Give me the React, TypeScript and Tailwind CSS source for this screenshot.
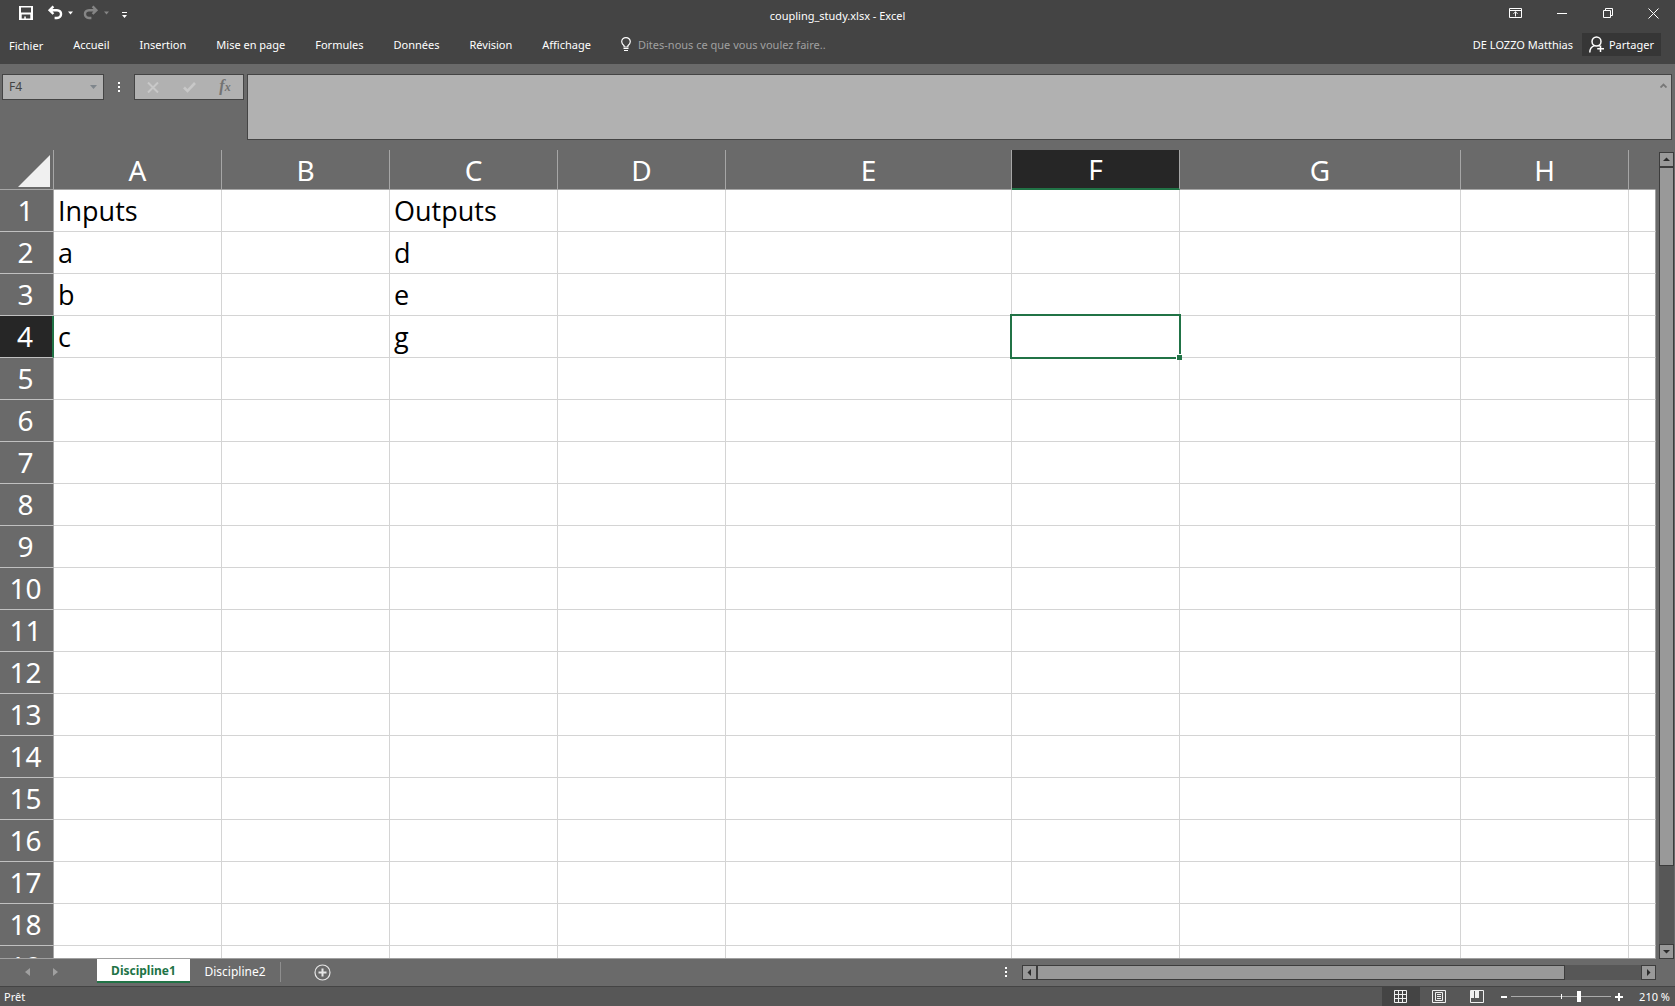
import { useState } from "react";

const columns = [
  { name: "A", width: "w-[168px]" },
  { name: "B", width: "w-[168px]" },
  { name: "C", width: "w-[168px]" },
  { name: "D", width: "w-[168px]" },
  { name: "E", width: "w-[286px]" },
  { name: "F", width: "w-[168px]" },
  { name: "G", width: "w-[281px]" },
  { name: "H", width: "w-[168px]" },
  { name: "", width: "" },
];

const rowCount = 19;

const cells: Record<string, string> = {
  A1: "Inputs",
  A2: "a",
  A3: "b",
  A4: "c",
  C1: "Outputs",
  C2: "d",
  C3: "e",
  C4: "g",
};

const menus = [
  "Accueil",
  "Insertion",
  "Mise en page",
  "Formules",
  "Données",
  "Révision",
  "Affichage",
];

function Caret({ className }: { className: string }) {
  return (
    <svg className={className} width="7" height="4" viewBox="0 0 7 4" fill="currentColor" aria-hidden="true">
      <path d="M0 0h7L3.5 4z" />
    </svg>
  );
}

function Dots() {
  return (
    <span className="flex w-[2px] flex-col gap-[2px]" aria-hidden="true">
      <span className="h-[2px] bg-white" />
      <span className="h-[2px] bg-white" />
      <span className="h-[2px] bg-white" />
    </span>
  );
}

function TitleBar() {
  return (
    <div className="grid h-[33px] grid-cols-[1fr_auto_1fr] text-white">
      <div className="flex items-start pt-[5px] pl-[18px]">
        <button aria-label="Enregistrer" className="mr-[13px]">
          <svg width="16" height="16" viewBox="0 0 16 16" fill="currentColor">
            <path fillRule="evenodd" d="M1 1h14v14H1zM3 2.5v5h10v-5zM3.7 9.5v4h2.6v-2h1.5v2h4.5v-4z" />
          </svg>
        </button>
        <button aria-label="Annuler" className="mr-[5px]">
          <svg width="16" height="16" viewBox="0 0 16 16" fill="none" stroke="currentColor" strokeWidth="2.4">
            <path d="M6.4 1.4 2.6 5.2l3.8 3.8M2.8 5.2H10c5.4 0 5.4 7.8 0 7.8H7.6" />
          </svg>
        </button>
        <button aria-label="Options d'annulation" className="mr-[10px] pt-[6px]">
          <Caret className="w-[5px]" />
        </button>
        <button aria-label="Rétablir" className="mr-[5px] text-[#858585]">
          <svg width="16" height="16" viewBox="0 0 16 16" fill="none" stroke="currentColor" strokeWidth="2.4">
            <path d="M9.6 1.4l3.8 3.8-3.8 3.8M13.2 5.2H6C.6 5.2.6 13 6 13h2.4" />
          </svg>
        </button>
        <button aria-label="Options de rétablissement" className="mr-[13px] pt-[6px] text-[#858585]">
          <Caret className="w-[5px]" />
        </button>
        <button aria-label="Personnaliser la barre d'accès rapide" className="pt-[7px]">
          <svg width="5" height="6" viewBox="0 0 5 6" fill="currentColor">
            <path d="M0 0h5v1H0zM0 3h5L2.5 6z" />
          </svg>
        </button>
      </div>
      <h1 className="pt-[8px] text-[11px] leading-[16px]">coupling_study.xlsx - Excel</h1>
      <div className="flex justify-end pb-[7px]">
        <button aria-label="Options d'affichage du ruban" className="flex w-[48px] items-center justify-center">
          <svg width="13" height="10" viewBox="0 0 13 10" fill="none" stroke="currentColor">
            <path d="M.5.5h12v9H.5zM0 2.5h13M6.5 8.5v-5M4.5 5.8l2-2 2 2" />
          </svg>
        </button>
        <button aria-label="Réduire" className="flex w-[46px] items-center justify-center">
          <span className="h-px w-[10px] bg-white" />
        </button>
        <button aria-label="Restaurer" className="flex w-[46px] items-center justify-center">
          <svg width="10" height="10" viewBox="0 0 10 10" fill="none" stroke="currentColor">
            <path d="M.5 2.5h7v7h-7zM2.5 2V.5h7v7H8" />
          </svg>
        </button>
        <button aria-label="Fermer" className="flex w-[44px] items-center justify-center">
          <svg width="11" height="11" viewBox="0 0 11 11" fill="none" stroke="currentColor">
            <path d="m.5.5 10 10M10.5.5l-10 10" />
          </svg>
        </button>
      </div>
    </div>
  );
}

function MenuBar() {
  return (
    <nav className="flex h-[31px] items-start pr-[14px] pl-[9px] text-[11px] leading-[16px] text-white">
      <div className="flex gap-[30px] pt-[4px]">
        <button className="pt-px">Fichier</button>
        {menus.map((m) => (
          <button key={m} className="pb-px">
            {m}
          </button>
        ))}
      </div>
      <label className="ml-[30px] flex flex-1 gap-[7px] pt-[4px]">
        <svg className="shrink-0" width="10" height="15" viewBox="0 0 10 15" fill="none" stroke="currentColor" aria-hidden="true">
          <path strokeWidth="1.2" d="M3.1 10V8.7C1.6 7.3.7 6.3.7 4.7a4.3 4.1 0 0 1 8.6 0c0 1.6-.9 2.6-2.4 4V10z" />
          <path d="M2.5 11.5h5M3 13.5h4" />
        </svg>
        <input
          aria-label="Dites-nous ce que vous voulez faire"
          placeholder="Dites-nous ce que vous voulez faire.."
          className="h-[16px] w-[220px] bg-transparent outline-none placeholder:text-[#a0a0a0]"
        />
      </label>
      <span className="mr-[9px] pt-[4px]">DE LOZZO Matthias</span>
      <button className="flex h-[23px] items-center gap-[4px] bg-[#363636] pr-[7px] pl-[7px]">
        <svg width="16" height="17" viewBox="0 0 16 17" fill="none" stroke="currentColor" strokeWidth="1.5" aria-hidden="true">
          <circle cx="7.5" cy="5.5" r="4.5" />
          <path d="M.8 16.5C.8 13 2.5 10.6 5.3 9.6M9.7 9.3l1 1M11.5 9.5v6.5M8.2 12.75h6.8" />
        </svg>
        Partager
      </button>
    </nav>
  );
}

function FormulaBar() {
  return (
    <div className="flex items-start bg-[#6a6a6a] pt-[10px] pr-[3px] pb-[10px] pl-[2px]">
      <div className="flex h-[26px] w-[102px] items-center border border-[#444] bg-[#b1b1b1] pr-[6px] pl-[6px] text-[#444]">
        <input aria-label="Zone Nom" defaultValue="F4" className="min-w-0 flex-1 bg-transparent text-[12px] outline-none" />
        <button aria-label="Liste des noms" className="text-[#7f868c]">
          <Caret className="w-[7px]" />
        </button>
      </div>
      <div className="flex h-[26px] w-[30px] items-center justify-center">
        <Dots />
      </div>
      <div className="mr-[3px] flex h-[26px] w-[110px] items-center border border-[#444] bg-[#b1b1b1]">
        <button aria-label="Annuler la saisie" className="flex flex-1 justify-center text-[#c8c8c8]">
          <svg width="12" height="11" viewBox="0 0 12 11" fill="none" stroke="currentColor" strokeWidth="2">
            <path d="m1 .5 10 10M11 .5l-10 10" />
          </svg>
        </button>
        <button aria-label="Valider" className="flex flex-1 justify-center text-[#c8c8c8]">
          <svg width="13" height="11" viewBox="0 0 13 11" fill="none" stroke="currentColor" strokeWidth="2.6">
            <path d="m1 5.5 3.5 3.5L12 1" />
          </svg>
        </button>
        <button
          aria-label="Insérer une fonction"
          className="flex-1 pb-[2px] font-['Liberation_Serif',serif] text-[16px] leading-[16px] font-bold text-[#737373] italic"
        >
          f<span className="text-[12px]">x</span>
        </button>
      </div>
      <div className="relative flex h-[66px] flex-1">
        <textarea aria-label="Barre de formule" className="flex-1 resize-none border border-[#444] bg-[#b1b1b1] p-1 text-[12px] outline-none" />
        <button aria-label="Réduire la barre de formule" className="absolute top-[9px] right-[5px] text-[#777]">
          <svg width="7" height="5" viewBox="0 0 7 5" fill="none" stroke="currentColor" strokeWidth="1.8">
            <path d="M.5 4.5l3-3 3 3" />
          </svg>
        </button>
      </div>
    </div>
  );
}

function Sheet() {
  const rows = Array.from({ length: rowCount }, (_, i) => i + 1);
  return (
    <div className="min-w-0 flex-1 overflow-hidden border-b border-[#a0a0a0] bg-white">
      <table className="w-full table-fixed border-separate border-spacing-0 text-[28px] leading-[38px]">
        <thead>
          <tr className="h-[40px] bg-[#6a6a6a] text-white">
            <th className="w-[54px] border-r border-b border-[#a6a6a6] p-0">
              <button aria-label="Tout sélectionner" className="block pt-[2px] pl-[18px]">
                <svg width="32" height="32" viewBox="0 0 32 32" fill="#f0f0f0">
                  <path d="M32 0v32H0z" />
                </svg>
              </button>
            </th>
            {columns.map((c) => (
              <th
                key={c.name}
                scope="col"
                className={`${c.width} p-0 font-normal ${
                  c.name === "F"
                    ? "border-r border-b-2 border-r-[#a6a6a6] border-b-[#217346] bg-[#262626]"
                    : c.name
                      ? "border-r border-b border-[#a6a6a6]"
                      : "border-r border-b border-r-[#6a6a6a] border-b-[#a6a6a6]"
                }`}
              >
                {c.name}
              </th>
            ))}
          </tr>
        </thead>
        <tbody>
          {rows.map((r) => (
            <tr key={r} className="h-[42px]">
              <th
                scope="row"
                className={`border-b border-b-[#c0c0c0] pt-0 pr-[2px] pb-[2px] pl-0 font-normal text-white ${
                  r === 4 ? "border-r-2 border-r-[#217346] bg-[#262626]" : "border-r border-r-[#a6a6a6] bg-[#6a6a6a]"
                }`}
              >
                {r}
              </th>
              {columns.map((c) => (
                <td
                  key={c.name}
                  className={`relative border-r border-b border-[#d4d4d4] py-0 pr-0 pl-[4px] font-['Open_Sans','Noto_Sans',sans-serif] text-[27px] text-black ${
                    c.name ? "" : "border-r-[#a0a0a0]"
                  }`}
                >
                  {cells[c.name + r]}
                  {c.name === "F" && r === 4 && (
                    <span className="absolute -inset-[2px] z-10 border-2 border-[#217346]">
                      <span className="absolute -right-[3px] -bottom-[3px] size-[6px] border-t border-l border-white bg-[#217346]" />
                    </span>
                  )}
                </td>
              ))}
            </tr>
          ))}
        </tbody>
      </table>
    </div>
  );
}

function ScrollArrow({ label, d }: { label: string; d: string }) {
  return (
    <button aria-label={label} className="flex size-[15px] shrink-0 items-center justify-center border border-[#3c3c3c] bg-[#999] text-[#2b2b2b]">
      <svg width="7" height="7" viewBox="0 0 7 7" fill="currentColor">
        <path d={d} />
      </svg>
    </button>
  );
}

function SheetTabs() {
  return (
    <div className="flex h-[27px] shrink-0 items-start bg-[#6a6a6a] pr-[19px] text-[12px] leading-[16px] text-white">
      <div className="flex w-[97px] items-center gap-[23px] pt-[9px] pl-[25px] text-[#a0a0a0]">
        <button aria-label="Feuille précédente">
          <svg width="5" height="8" viewBox="0 0 5 8" fill="currentColor">
            <path d="M5 0v8L0 4z" />
          </svg>
        </button>
        <button aria-label="Feuille suivante">
          <svg width="5" height="8" viewBox="0 0 5 8" fill="currentColor">
            <path d="M0 0v8l5-4z" />
          </svg>
        </button>
      </div>
      <button className="h-[24px] w-[93px] border-b-2 border-[#217346] bg-white pt-[2px] font-bold text-[#217346]">Discipline1</button>
      <button className="mt-[3px] h-[20px] w-[91px] border-r border-[#8e8e8e]">Discipline2</button>
      <button aria-label="Nouvelle feuille" className="mt-[5px] ml-[33px]">
        <svg width="17" height="17" viewBox="0 0 17 17" fill="none" stroke="#e6e6e6">
          <circle cx="8.5" cy="8.5" r="7.5" strokeWidth="1.2" />
          <path strokeWidth="2" d="M8.5 4.5v8M4.5 8.5h8" />
        </svg>
      </button>
      <div className="flex-1" />
      <div className="flex w-[655px] items-start pt-[6px]">
        <div className="w-[21px] pt-[2px] pl-[4px]">
          <Dots />
        </div>
        <div className="flex flex-1 bg-[#575757]">
          <ScrollArrow label="Défiler à gauche" d="M5 0v7L1.5 3.5z" />
          <div className="h-[15px] w-[528px] border border-[#3c3c3c] bg-[#999]" />
          <div className="flex-1" />
          <ScrollArrow label="Défiler à droite" d="M2 0v7l3.5-3.5z" />
        </div>
      </div>
    </div>
  );
}

function StatusBar() {
  const [zoom, setZoom] = useState(69);
  return (
    <footer className="flex h-[20px] shrink-0 items-stretch border-t border-[#444] bg-[#575757] pr-[5px] pl-[4px] text-[11px] leading-[19px] text-white">
      <span className="flex-1">Prêt</span>
      <button aria-label="Normal" className="flex w-[38px] items-center justify-center bg-[#444] pr-[2px]">
        <svg width="13" height="13" viewBox="0 0 13 13" fill="none" stroke="#f0f0f0">
          <path d="M.5.5h12v12H.5zM4.5 0v13M8.5 0v13M0 4.5h13M0 8.5h13" />
        </svg>
      </button>
      <button aria-label="Mise en page" className="flex w-[38px] items-center justify-center">
        <svg width="14" height="13" viewBox="0 0 14 13" fill="none" stroke="#f0f0f0">
          <path d="M.5.5h13v12H.5zM3.5 2.5h7v8h-7zM5 4.5h4M5 6.5h4M5 8.5h4" />
        </svg>
      </button>
      <button aria-label="Aperçu des sauts de page" className="flex w-[38px] items-center justify-center">
        <svg width="14" height="13" viewBox="0 0 14 13" fill="none" stroke="#f0f0f0">
          <path d="M.5.5h13v12H.5z" />
          <path fill="#f0f0f0" stroke="none" d="M1 1h3v7H1zM5 1h4v7H5z" />
        </svg>
      </button>
      <button aria-label="Zoom arrière" className="flex w-[15px] items-center pl-[5px]">
        <span className="h-[2px] w-[6px] bg-white" />
      </button>
      <div className="relative flex items-center">
        <input
          type="range"
          aria-label="Zoom"
          min={0}
          max={100}
          value={zoom}
          onChange={(e) => setZoom(Number(e.target.value))}
          className="h-[11px] w-[100px] appearance-none bg-linear-to-b from-transparent from-45% via-white via-45% to-transparent to-55% [&::-webkit-slider-thumb]:h-[11px] [&::-webkit-slider-thumb]:w-[4px] [&::-webkit-slider-thumb]:appearance-none [&::-webkit-slider-thumb]:bg-white"
        />
        <span className="pointer-events-none absolute left-[50px] h-[5px] w-px bg-white" />
      </div>
      <button aria-label="Zoom avant" className="flex w-[24px] items-center pl-[4px]">
        <svg width="8" height="8" viewBox="0 0 8 8" stroke="#fff" strokeWidth="2">
          <path d="M4 0v8M0 4h8" />
        </svg>
      </button>
      <button className="w-[35px] text-right">210 %</button>
    </footer>
  );
}

export default function App() {
  return (
    <div className="flex h-screen flex-col overflow-hidden bg-[#6a6a6a] font-['Noto_Sans','Open_Sans',sans-serif]">
      <header className="shrink-0">
        <div className="bg-[#444]">
          <TitleBar />
          <MenuBar />
        </div>
        <FormulaBar />
      </header>
      <main className="flex min-h-0 flex-1">
        <Sheet />
        <div className="flex w-[19px] shrink-0 pt-[2px] pr-px pl-[3px]">
          <div className="flex w-[15px] flex-col bg-[#575757]">
            <ScrollArrow label="Défiler vers le haut" d="M0 5h7L3.5 1.5z" />
            <div className="h-[699px] border border-[#3c3c3c] bg-[#999]" />
            <div className="flex-1" />
            <ScrollArrow label="Défiler vers le bas" d="M0 2h7L3.5 5.5z" />
          </div>
        </div>
      </main>
      <SheetTabs />
      <StatusBar />
    </div>
  );
}
